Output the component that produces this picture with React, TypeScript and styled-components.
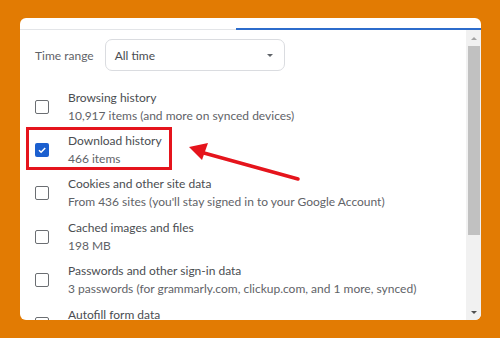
import React from "react";
import styled, { createGlobalStyle } from "styled-components";

const Global = createGlobalStyle`
  html, body { margin: 0; padding: 0; }
  body {
    background: #e27b03;
    width: 500px;
    height: 338px;
    overflow: hidden;
    font-family: Lato, "Open Sans", sans-serif;
  }
`;

const Page = styled.div`
  padding: 18px 19px 0 20px;
`;

const Card = styled.div`
  position: relative;
  width: 461px;
  height: 302px;
  background: #fff;
  border-radius: 6px;
  overflow: hidden;
  display: flex;
  flex-direction: column;
`;

const TopBar = styled.div`
  height: 10px;
  flex: none;
`;

const Tabs = styled.div`
  display: flex;
  align-items: flex-end;
  height: 2px;
  flex: none;
`;

const TabLine = styled.div<{ $active?: boolean }>`
  flex: ${(p) => (p.$active ? "0 0 245px" : "1")};
  height: ${(p) => (p.$active ? "2px" : "1px")};
  background: ${(p) => (p.$active ? "#2c6ccc" : "#e3e5e8")};
`;

const Body = styled.div`
  flex: 1;
  display: flex;
  min-height: 0;
`;

const Main = styled.div`
  flex: 1;
  padding: 9px 0 0 15px;
  overflow: hidden;
`;

const RangeRow = styled.div`
  display: flex;
  align-items: center;
  gap: 11px;
  height: 32px;
  margin-bottom: 14px;
`;

const Label = styled.span`
  font-size: 12px;
  color: #5f6368;
`;

const Select = styled.div`
  box-sizing: border-box;
  width: 180px;
  height: 32px;
  border: 1px solid #dadce0;
  border-radius: 7px;
  display: flex;
  align-items: center;
  justify-content: space-between;
  padding: 0 9px 0 9px;
  font-size: 12px;
  color: #4a4d51;
`;

const Caret = styled.span`
  width: 0;
  height: 0;
  border-left: 3.5px solid transparent;
  border-right: 3.5px solid transparent;
  border-top: 3.5px solid #5f6368;
  margin-right: 2px;
`;

const Row = styled.div`
  position: relative;
  display: flex;
  align-items: center;
  height: 43.4px;
`;

const Box = styled.div<{ $checked?: boolean }>`
  box-sizing: border-box;
  width: 14px;
  height: 14px;
  flex: none;
  border-radius: 2px;
  border: ${(p) => (p.$checked ? "none" : "1.6px solid #6b6e72")};
  background: ${(p) => (p.$checked ? "#1b5fcf" : "#fff")};
  display: flex;
  align-items: center;
  justify-content: center;
`;

const Texts = styled.div`
  margin-left: 19px;
  display: flex;
  flex-direction: column;
`;

const Title = styled.div`
  font-size: 12px;
  line-height: 18px;
  color: #4a4d51;
  white-space: nowrap;
`;

const Sub = styled.div`
  font-size: 12px;
  line-height: 18px;
  min-height: 18px;
  color: #5f6368;
  white-space: nowrap;
`;

const Highlight = styled.div`
  position: absolute;
  left: -9px;
  top: -1px;
  width: 146px;
  height: 43px;
  box-sizing: border-box;
  border: 3px solid #e5141c;
  pointer-events: none;
`;

const Scrollbar = styled.div`
  width: 15px;
  flex: none;
  background: #f1f1f1;
  display: flex;
  flex-direction: column;
  align-items: center;
`;

const ArrowBtn = styled.div`
  height: 16px;
  width: 100%;
  display: flex;
  align-items: center;
  justify-content: center;
  flex: none;
`;

const Tri = styled.span<{ $down?: boolean }>`
  width: 0;
  height: 0;
  border-left: 3.5px solid transparent;
  border-right: 3.5px solid transparent;
  ${(p) =>
    p.$down
      ? "border-top: 3.5px solid #505050;"
      : "border-bottom: 3.5px solid #a3a3a3;"}
`;

const Thumb = styled.div`
  width: 12px;
  height: 189px;
  background: #c1c1c1;
  flex: none;
`;

const Spacer = styled.div`
  flex: 1;
`;

const Arrow = styled.svg`
  position: absolute;
  left: 0;
  top: 0;
  pointer-events: none;
`;

const items = [
  { t: "Browsing history", s: "10,917 items (and more on synced devices)" },
  { t: "Download history", s: "466 items", checked: true },
  { t: "Cookies and other site data", s: "From 436 sites (you'll stay signed in to your Google Account)" },
  { t: "Cached images and files", s: "198 MB" },
  { t: "Passwords and other sign-in data", s: "3 passwords (for grammarly.com, clickup.com, and 1 more, synced)" },
  { t: "Autofill form data", s: "" },
];

export default function App() {
  return (
    <>
      <Global />
      <Page>
        <Card>
          <TopBar />
          <Tabs>
            <TabLine />
            <TabLine $active />
          </Tabs>
          <Body>
            <Main>
              <RangeRow>
                <Label>Time range</Label>
                <Select>
                  <span>All time</span>
                  <Caret />
                </Select>
              </RangeRow>
              {items.map((it) => (
                <Row key={it.t}>
                  <Box $checked={it.checked}>
                    {it.checked && (
                      <svg width="10" height="10" viewBox="0 0 10 10">
                        <path d="M2 5.2 L4.1 7.2 L8.2 2.9" fill="none" stroke="#fff" strokeWidth="1.5" />
                      </svg>
                    )}
                  </Box>
                  <Texts>
                    <Title>{it.t}</Title>
                    <Sub>{it.s}</Sub>
                  </Texts>
                  {it.checked && <Highlight />}
                </Row>
              ))}
            </Main>
            <Scrollbar>
              <ArrowBtn>
                <Tri />
              </ArrowBtn>
              <Thumb />
              <Spacer />
              <ArrowBtn>
                <Tri $down />
              </ArrowBtn>
            </Scrollbar>
          </Body>
          <Arrow width="461" height="302" viewBox="0 0 461 302">
            <line x1="278" y1="161" x2="184" y2="135" stroke="#e5141c" strokeWidth="3.5" strokeLinecap="round" />
            <polygon points="169,129 188,125 182,142" fill="#e5141c" />
          </Arrow>
        </Card>
      </Page>
    </>
  );
}
